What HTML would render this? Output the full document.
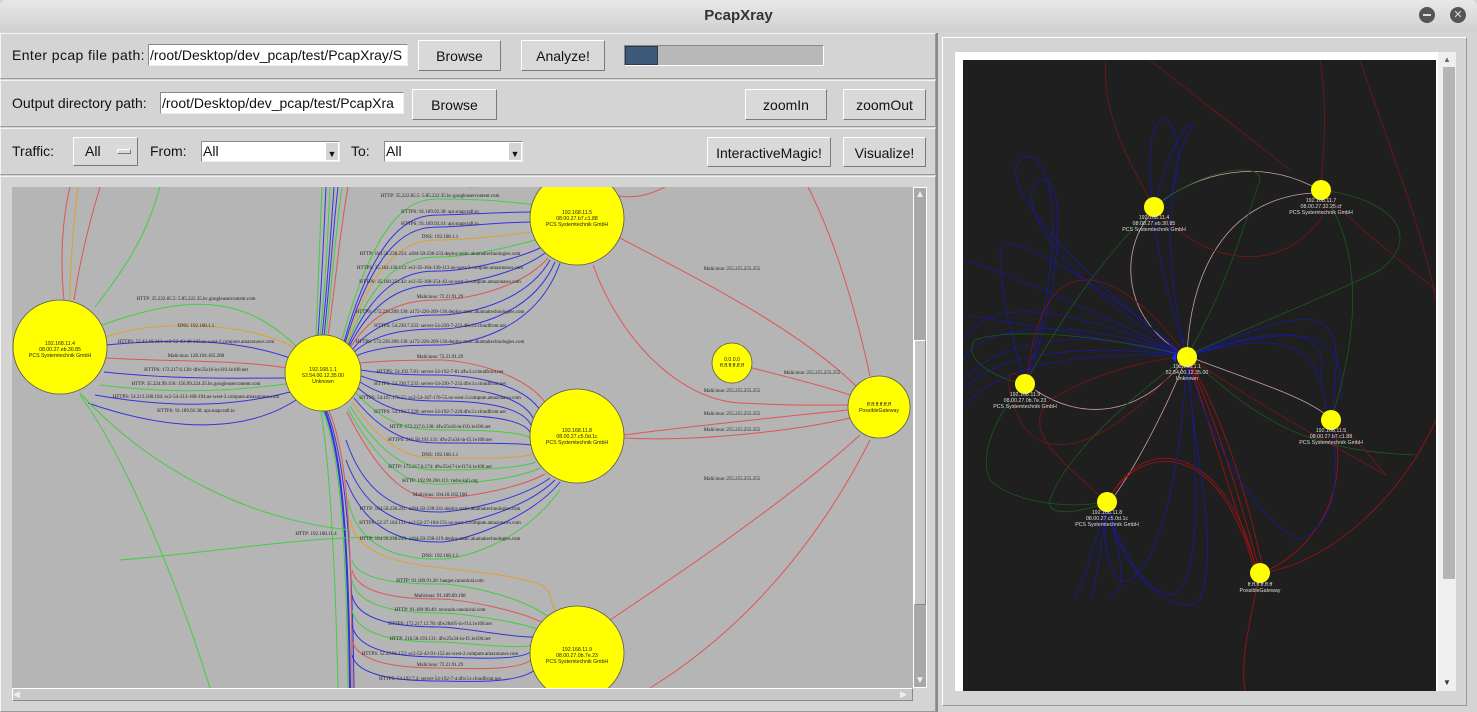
<!DOCTYPE html>
<html><head><meta charset="utf-8"><style>
*{box-sizing:border-box;margin:0;padding:0}
body{width:1477px;height:712px;overflow:hidden;background:#d4d4d4;font-family:"Liberation Sans","DejaVu Sans",sans-serif;font-size:14px;color:#111;position:relative}
.abs{position:absolute}
.title{left:0;top:0;width:1477px;height:32px;background:linear-gradient(#e8e8e8,#d0d0d0);border-radius:6px 6px 0 0;text-align:center;line-height:32px;font-weight:bold;font-size:15px;color:#333}
.panel{border:1px solid #f4f4f4;border-right-color:#9a9a9a;border-bottom-color:#9a9a9a;background:#d4d4d4}
.btn{background:#d9d9d9;border:1px solid #fff;border-right-color:#7a7a7a;border-bottom-color:#7a7a7a;text-align:center;line-height:30px;font-size:14px}
.entry{background:#fff;border:1px solid #888;border-right-color:#eee;border-bottom-color:#eee;line-height:20px;font-size:14px;padding-left:1px;overflow:hidden;white-space:nowrap}
.lbl{font-size:14px;line-height:20px}
.circ{border-radius:50%;background:#555;width:16px;height:16px}
</style></head><body>
<div class="abs title">PcapXray</div>
<div class="abs circ" style="left:1419px;top:7px"><div style="position:absolute;left:4px;top:7px;width:8px;height:2px;background:#ddd"></div></div>
<div class="abs circ" style="left:1450px;top:7px;color:#ddd;font-size:11px;line-height:16px;text-align:center;font-weight:bold">✕</div>

<div class="abs panel" style="left:0;top:33px;width:936px;height:46px"></div>
<div class="abs lbl" style="left:12px;top:45px;letter-spacing:0.4px">Enter pcap file path:</div>
<div class="abs entry" style="left:148px;top:44px;width:260px;height:22px">/root/Desktop/dev_pcap/test/PcapXray/S</div>
<div class="abs btn" style="left:418px;top:40px;width:83px;height:31px">Browse</div>
<div class="abs btn" style="left:521px;top:40px;width:84px;height:31px">Analyze!</div>
<div class="abs" style="left:624px;top:45px;width:200px;height:21px;background:#b8b8b8;border:1px solid #fff;border-top-color:#888;border-left-color:#888"><div style="width:33px;height:19px;background:#3e5a78;border:1px solid #2a3a4a"></div></div>

<div class="abs panel" style="left:0;top:80px;width:936px;height:47px"></div>
<div class="abs lbl" style="left:12px;top:93px">Output directory path:</div>
<div class="abs entry" style="left:160px;top:92px;width:244px;height:22px">/root/Desktop/dev_pcap/test/PcapXra</div>
<div class="abs btn" style="left:412px;top:89px;width:85px;height:31px">Browse</div>
<div class="abs btn" style="left:745px;top:89px;width:82px;height:31px">zoomIn</div>
<div class="abs btn" style="left:843px;top:89px;width:83px;height:31px">zoomOut</div>

<div class="abs panel" style="left:0;top:128px;width:936px;height:47px"></div>
<div class="abs lbl" style="left:12px;top:141px">Traffic:</div>
<div class="abs btn" style="left:73px;top:137px;width:65px;height:29px;text-align:left;padding-left:11px;line-height:27px">All<span style="position:absolute;left:43px;top:11px;width:14px;height:5px;border:1px solid #fff;border-right-color:#777;border-bottom-color:#777"></span></div>
<div class="abs lbl" style="left:150px;top:141px">From:</div>
<div class="abs entry" style="left:201px;top:141px;width:139px;height:21px;line-height:19px">All<span style="position:absolute;right:1px;top:1px;width:12px;height:17px;background:#d4d4d4;font-size:9px;line-height:22px;text-align:center">▼</span></div>
<div class="abs lbl" style="left:351px;top:141px">To:</div>
<div class="abs entry" style="left:384px;top:141px;width:139px;height:21px;line-height:19px">All<span style="position:absolute;right:1px;top:1px;width:12px;height:17px;background:#d4d4d4;font-size:9px;line-height:22px;text-align:center">▼</span></div>
<div class="abs btn" style="left:707px;top:137px;width:124px;height:30px">InteractiveMagic!</div>
<div class="abs btn" style="left:843px;top:137px;width:83px;height:30px">Visualize!</div>

<div class="abs panel" style="left:0;top:176px;width:936px;height:536px"></div>

<svg class="abs" style="left:12px;top:187px" width="901" height="501" viewBox="12 187 901 501">
<rect x="12" y="187" width="901" height="501" fill="#b5b5b5"/>
<g fill="none" stroke-width="1">
<path d="M320,336 C326,280 328,230 330,187" stroke="#44cc44"/>
<path d="M322,336 C328,280 331,230 334,187" stroke="#3333dd"/>
<path d="M324,336 C330,280 333,230 338,187" stroke="#3333dd"/>
<path d="M326,336 C332,280 336,230 342,187" stroke="#44cc44"/>
<path d="M318,336 C322,280 324,230 326,187" stroke="#3333dd"/>
<path d="M328,336 C336,280 340,230 348,187" stroke="#e05555"/>
<path d="M316,336 C318,280 320,230 322,187" stroke="#44cc44"/>
<path d="M325,411 C340,450 348,520 350,688" stroke="#3333dd" stroke-width="2"/>
<path d="M327,411 C342,450 352,520 354,688" stroke="#3333dd"/>
<path d="M323,411 C338,450 346,520 348,688" stroke="#44cc44"/>
<path d="M321,411 C330,470 335,560 338,688" stroke="#44cc44"/>
<path d="M329,411 C346,450 352,520 352,688" stroke="#e05555"/>
<path d="M64,300 C60,260 62,220 70,187" stroke="#e05555"/>
<path d="M70,300 C70,260 74,220 78,187" stroke="#e0a030"/>
<path d="M74,300 C80,260 90,220 100,187" stroke="#e05555"/>
<path d="M95,307 C140,250 150,220 160,187" stroke="#44cc44"/>
<path d="M102,325 C200,290 250,300 300,350" stroke="#44cc44"/>
<path d="M298,350 C250,320 150,320 106,337" stroke="#e0a030"/>
<path d="M106,345 C180,338 240,340 290,358" stroke="#3333dd"/>
<path d="M106,358 C180,362 240,360 286,368" stroke="#e05555"/>
<path d="M104,372 C180,380 240,378 286,378" stroke="#3333dd"/>
<path d="M100,385 C180,395 240,390 286,384" stroke="#44cc44"/>
<path d="M95,395 C180,410 240,405 290,392" stroke="#3333dd"/>
<path d="M88,403 C180,435 250,430 296,400" stroke="#3333dd"/>
<path d="M80,395 C120,450 170,560 210,688" stroke="#44cc44"/>
<path d="M350,530 C250,520 150,470 80,393" stroke="#44cc44"/>
<path d="M120,560 C240,550 340,530 420,540" stroke="#44cc44"/>
<path d="M342,340 C380,199 420,199 440,199 S500,200 535,205" stroke="#44cc44"/>
<path d="M344,342 C380,215 420,215 440,215 S500,212 535,212" stroke="#3333dd"/>
<path d="M345,343 C380,227 420,227 440,227 S500,222 533,222" stroke="#3333dd"/>
<path d="M346,344 C380,240 420,240 440,240 S500,236 532,232" stroke="#e0a030"/>
<path d="M347,345 C380,257 420,257 440,257 S500,250 535,240" stroke="#44cc44"/>
<path d="M348,346 C380,271 420,271 440,271 S510,262 540,248" stroke="#3333dd"/>
<path d="M349,347 C380,285 420,285 440,285 S515,275 545,253" stroke="#3333dd"/>
<path d="M350,348 C380,300 420,300 440,300 S520,290 548,258" stroke="#e05555"/>
<path d="M352,350 C380,315 420,315 440,315 S525,305 550,260" stroke="#3333dd"/>
<path d="M354,352 C380,329 420,329 440,329 S530,320 555,262" stroke="#3333dd"/>
<path d="M356,356 C380,345 420,345 440,345 S535,335 560,263" stroke="#3333dd"/>
<path d="M360,363 C390,360 420,360 440,360 S520,370 545,402" stroke="#e05555"/>
<path d="M361,370 C390,375 420,375 440,375 S520,380 540,410" stroke="#3333dd"/>
<path d="M361,376 C390,387 420,387 440,387 S520,392 533,418" stroke="#3333dd"/>
<path d="M360,382 C390,401 420,401 440,401 S520,402 531,425" stroke="#3333dd"/>
<path d="M358,388 C390,415 420,415 440,415 S520,415 530,432" stroke="#3333dd"/>
<path d="M356,393 C390,430 420,430 440,430 S520,430 530,438" stroke="#44cc44"/>
<path d="M354,398 C390,443 420,443 440,443 S520,443 531,445" stroke="#3333dd"/>
<path d="M352,402 C390,458 420,458 440,458 S515,460 533,454" stroke="#e0a030"/>
<path d="M350,406 C390,470 420,470 440,470 S515,470 536,462" stroke="#44cc44"/>
<path d="M348,409 C390,484 420,484 440,484 S515,480 540,468" stroke="#44cc44"/>
<path d="M347,412 C390,498 420,498 440,498 S515,490 545,474" stroke="#e05555"/>
<path d="M346,440 C370,512 420,512 440,512 S520,500 550,478" stroke="#3333dd"/>
<path d="M346,460 C370,526 420,526 440,526 S525,510 555,480" stroke="#3333dd"/>
<path d="M346,480 C370,542 420,542 440,542 S530,520 560,482" stroke="#3333dd"/>
<path d="M348,500 C360,559 420,559 440,559 S520,545 560,490" stroke="#44cc44"/>
<path d="M350,520 C360,570 440,565 500,575 S545,590 555,610" stroke="#e0a030"/>
<path d="M352,560 C358,584 420,584 440,584 S520,595 550,618" stroke="#44cc44"/>
<path d="M352,570 C358,599 420,599 440,599 S520,610 545,624" stroke="#e05555"/>
<path d="M352,580 C358,613 420,613 440,613 S520,622 540,630" stroke="#44cc44"/>
<path d="M352,595 C358,627 420,627 440,627 S515,638 535,637" stroke="#3333dd"/>
<path d="M352,610 C358,642 420,642 440,642 S515,650 533,645" stroke="#44cc44"/>
<path d="M352,625 C358,657 420,657 440,657 S515,662 531,652" stroke="#3333dd"/>
<path d="M352,640 C358,668 420,668 440,668 S515,672 531,660" stroke="#e05555"/>
<path d="M352,655 C358,681 420,681 440,681 S515,685 535,670" stroke="#3333dd"/>
<path d="M620,238 C700,280 800,330 858,388" stroke="#e05555"/>
<path d="M593,265 C620,340 680,400 740,403 S820,405 848,405" stroke="#e05555"/>
<path d="M624,435 C700,425 800,415 848,410" stroke="#e05555"/>
<path d="M624,438 C700,442 800,430 850,418" stroke="#e05555"/>
<path d="M752,368 C800,380 830,388 850,395" stroke="#e05555"/>
<path d="M610,620 C700,560 800,490 860,435" stroke="#e05555"/>
<path d="M650,688 C760,620 830,520 870,440" stroke="#e05555"/>
<path d="M808,187 C840,250 860,330 870,376" stroke="#e05555"/>
<path d="M470,187 C520,180 560,175 600,187" stroke="#e05555"/>
<path d="M590,187 C620,200 640,200 665,187" stroke="#e05555"/>
</g>
<g fill="#ffff00" stroke="#555" stroke-width="0.8">
<circle cx="60" cy="347" r="47"/>
<circle cx="323" cy="373" r="38"/>
<circle cx="577" cy="218" r="47"/>
<circle cx="732" cy="363" r="20"/>
<circle cx="879" cy="407" r="31"/>
<circle cx="577" cy="436" r="47"/>
<circle cx="577" cy="653" r="47"/>
</g>
<g font-family="Liberation Sans,sans-serif" font-size="5.2" text-anchor="middle" fill="#222">
<text x="60" y="345">192.168.11.4</text><text x="60" y="351">08.00.27.eb.30.85</text><text x="60" y="357">PCS Systemtechnik GmbH</text>
<text x="323" y="371">192.168.1.1</text><text x="323" y="377">52.54.00.12.35.00</text><text x="323" y="383">Unknown</text>
<text x="577" y="214">192.168.11.5</text><text x="577" y="220">08.00.27.b7.c1.88</text><text x="577" y="226">PCS Systemtechnik GmbH</text>
<text x="732" y="361">0.0.0.0</text><text x="732" y="367">ff.ff.ff.ff.ff.ff</text>
<text x="879" y="406">ff.ff.ff.ff.ff.ff</text><text x="879" y="412">PossibleGateway</text>
<text x="577" y="432">192.168.11.8</text><text x="577" y="438">08.00.27.c5.0d.1c</text><text x="577" y="444">PCS Systemtechnik GmbH</text>
<text x="577" y="651">192.168.11.9</text><text x="577" y="657">08.00.27.0b.7e.23</text><text x="577" y="663">PCS Systemtechnik GmbH</text>
</g>
<g font-family="Liberation Serif,serif" font-size="5" text-anchor="middle" fill="#222">
<text x="196" y="300">HTTP: 35.222.85.5: 5.85.222.35.bc.googleusercontent.com</text>
<text x="196" y="327">DNS: 192.168.1.1</text>
<text x="196" y="343">HTTPS: 52.43.40.243: ec2-52-43-40-243.us-west-2.compute.amazonaws.com</text>
<text x="196" y="357">Malicious: 128.194.165.200</text>
<text x="196" y="371">HTTPS: 172.217.6.138: dfw25s16-in-f10.1e100.net</text>
<text x="196" y="385">HTTP: 35.224.99.156: 156.99.224.35.bc.googleusercontent.com</text>
<text x="196" y="398">HTTPS: 54.213.168.194: ec2-54-213-168-194.us-west-2.compute.amazonaws.com</text>
<text x="196" y="412">HTTPS: 91.189.92.38: api.snapcraft.io</text>
<text x="440" y="197">HTTP: 35.222.85.5: 5.85.222.35.bc.googleusercontent.com</text>
<text x="440" y="213">HTTPS: 91.189.92.38: api.snapcraft.io</text>
<text x="440" y="225">HTTPS: 91.189.92.41: api.snapcraft.io</text>
<text x="440" y="238">DNS: 192.168.1.1</text>
<text x="440" y="255">HTTP: 184.50.238.233: a184-50-238-233.deploy.static.akamaitechnologies.com</text>
<text x="440" y="269">HTTPS: 35.164.130.113: ec2-35-164-130-113.us-west-2.compute.amazonaws.com</text>
<text x="440" y="283">HTTPS: 35.160.254.42: ec2-35-160-254-42.us-west-2.compute.amazonaws.com</text>
<text x="440" y="298">Malicious: 72.21.91.29</text>
<text x="440" y="313">HTTPS: 172.226.209.130: a172-226-209-130.deploy.static.akamaitechnologies.com</text>
<text x="440" y="327">HTTPS: 54.230.7.233: server-54-230-7-233.dfw3.r.cloudfront.net</text>
<text x="440" y="343">HTTPS: 172.226.209.130: a172-226-209-130.deploy.static.akamaitechnologies.com</text>
<text x="440" y="358">Malicious: 72.21.91.29</text>
<text x="440" y="373">HTTPS: 54.192.7.81: server-54-192-7-81.dfw3.r.cloudfront.net</text>
<text x="440" y="385">HTTPS: 54.230.7.233: server-54-230-7-233.dfw3.r.cloudfront.net</text>
<text x="440" y="399">HTTPS: 54.167.176.55: ec2-54-167-176-55.us-west-2.compute.amazonaws.com</text>
<text x="440" y="413">HTTPS: 54.192.7.220: server-54-192-7-220.dfw3.r.cloudfront.net</text>
<text x="440" y="428">HTTP: 172.217.6.138: dfw25s16-in-f10.1e100.net</text>
<text x="440" y="441">HTTPS: 216.58.193.131: dfw25s34-in-f3.1e100.net</text>
<text x="440" y="456">DNS: 192.168.1.1</text>
<text x="440" y="468">HTTP: 172.217.6.174: dfw25s17-in-f174.1e100.net</text>
<text x="440" y="482">HTTP: 192.99.200.113: tiebo.kali.org</text>
<text x="440" y="496">Malicious: 104.18.102.100</text>
<text x="440" y="510">HTTP: 184.50.238.241: a184-50-238-241.deploy.static.akamaitechnologies.com</text>
<text x="440" y="524">HTTPS: 52.27.184.151: ec2-52-27-184-151.us-west-2.compute.amazonaws.com</text>
<text x="440" y="540">HTTP: 184.50.238.219: a184-50-238-219.deploy.static.akamaitechnologies.com</text>
<text x="440" y="557">DNS: 192.168.1.1</text>
<text x="316" y="535">HTTP: 192.168.11.4</text>
<text x="440" y="582">HTTP: 91.189.91.26: hanger.canonical.com</text>
<text x="440" y="597">Malicious: 91.189.89.198</text>
<text x="440" y="611">HTTP: 91.189.90.40: avocado.canonical.com</text>
<text x="440" y="625">HTTPS: 172.217.12.78: dfw28s05-in-f14.1e100.net</text>
<text x="440" y="640">HTTP: 216.58.193.131: dfw25s34-in-f3.1e100.net</text>
<text x="440" y="655">HTTPS: 52.43.91.152: ec2-52-43-91-152.us-west-2.compute.amazonaws.com</text>
<text x="440" y="666">Malicious: 72.21.91.29</text>
<text x="440" y="680">HTTPS: 54.192.7.4: server-54-192-7-4.dfw3.r.cloudfront.net</text>
<text x="732" y="270">Malicious: 255.255.255.255</text>
<text x="812" y="374">Malicious: 255.255.255.255</text>
<text x="732" y="392">Malicious: 255.255.255.255</text>
<text x="732" y="415">Malicious: 255.255.255.255</text>
<text x="732" y="431">Malicious: 255.255.255.255</text>
<text x="732" y="480">Malicious: 255.255.255.255</text>
</g>
</svg>
<div class="abs" style="left:913px;top:187px;width:14px;height:501px;background:#a8a8a8;border:1px solid #fff"></div>
<div class="abs" style="left:914px;top:202px;width:12px;height:138px;background:#a8a8a8"></div>
<div class="abs" style="left:914px;top:340px;width:12px;height:265px;background:#c8c8c8;border:1px solid #fff;border-right-color:#888;border-bottom-color:#888"></div>
<div class="abs" style="left:914px;top:188px;width:12px;height:13px;color:#eee;font-size:10px;text-align:center;line-height:13px">▲</div>
<div class="abs" style="left:914px;top:674px;width:12px;height:13px;color:#eee;font-size:10px;text-align:center;line-height:13px">▼</div>
<div class="abs" style="left:12px;top:688px;width:901px;height:13px;background:#c8c8c8;border:1px solid #fff;border-right-color:#888;border-bottom-color:#888"></div>
<div class="abs" style="left:13px;top:688px;width:12px;height:12px;color:#eee;font-size:9px;line-height:12px">◀</div>
<div class="abs" style="left:900px;top:688px;width:12px;height:12px;color:#eee;font-size:9px;line-height:12px">▶</div>

<div class="abs" style="left:936px;top:33px;width:2px;height:679px;background:#8a8a8a"></div>
<div class="abs" style="left:942px;top:37px;width:525px;height:669px;border:1px solid #fff;border-right-color:#999;border-bottom-color:#999"></div>
<div class="abs" style="left:955px;top:52px;width:495px;height:639px;background:#fff"></div>
<div class="abs" style="left:1438px;top:52px;width:18px;height:639px;background:#efefef"></div>
<div class="abs" style="left:1443px;top:67px;width:12px;height:512px;background:#b5b5b5"></div>
<div class="abs" style="left:1441px;top:55px;width:12px;height:10px;color:#666;font-size:8px;text-align:center">▲</div>
<div class="abs" style="left:1441px;top:678px;width:12px;height:10px;color:#333;font-size:8px;text-align:center">▼</div>
<svg class="abs" style="left:963px;top:60px" width="473" height="631" viewBox="963 60 473 631">
<rect x="963" y="60" width="473" height="631" fill="#1f1f1f"/>
<g fill="none" stroke-width="0.8">
<path d="M1106,60 C1100,120 1140,180 1154,207" stroke="#7a1515"/>
<path d="M1150,60 C1200,100 1240,130 1290,170" stroke="#7a1515"/>
<path d="M1320,60 C1330,120 1320,180 1321,190" stroke="#7a1515"/>
<path d="M1360,60 C1390,150 1420,220 1436,300" stroke="#7a1515"/>
<path d="M1154,207 C1200,170 1260,160 1312,186" stroke="#c8a0a8"/>
<path d="M1187,356 C1190,280 1220,200 1312,193" stroke="#c8a0a8"/>
<path d="M1187,356 C1120,320 1120,250 1150,215" stroke="#c8a0a8"/>
<path d="M1187,356 C1250,380 1300,395 1325,414" stroke="#c8a0a8"/>
<path d="M1187,356 C1170,400 1140,460 1115,495" stroke="#c8a0a8"/>
<path d="M1187,356 C1140,420 1080,420 1035,390" stroke="#c8a0a8"/>
<path d="M1187,356 C1220,430 1240,500 1258,565" stroke="#aa1111"/>
<path d="M1187,356 C1230,430 1250,510 1262,565" stroke="#aa1111"/>
<path d="M1187,356 C1215,440 1235,510 1256,566" stroke="#aa1111"/>
<path d="M1331,420 C1350,470 1330,540 1268,570" stroke="#aa1111"/>
<path d="M1436,420 C1400,500 1330,560 1268,572" stroke="#aa1111"/>
<path d="M1107,502 C1150,420 1230,460 1255,565" stroke="#aa1111"/>
<path d="M1107,502 C1140,440 1220,440 1253,566" stroke="#aa1111"/>
<path d="M1260,573 C1250,620 1240,660 1245,691" stroke="#aa1111"/>
<path d="M1187,356 C1050,300 990,300 963,340" stroke="#1a1a9a"/>
<path d="M1187,356 C1050,310 980,330 963,360" stroke="#1a1a9a"/>
<path d="M1187,356 C1060,320 990,350 963,380" stroke="#1a1a9a"/>
<path d="M1187,356 C1060,340 990,360 963,390" stroke="#1a1a9a"/>
<path d="M1187,356 C1060,350 1000,370 963,405" stroke="#1a1a9a"/>
<path d="M1187,356 C1060,330 1000,320 963,315" stroke="#1a1a9a"/>
<path d="M1187,356 C1070,300 1000,270 963,260" stroke="#1a1a9a"/>
<path d="M1187,356 C1050,250 1000,180 1020,160 C1040,140 1080,200 1025,384" stroke="#1a1a9a"/>
<path d="M1187,356 C1060,280 1010,200 1040,180 C1070,170 1060,300 1025,384" stroke="#1a1a9a"/>
<path d="M1187,356 C1070,260 1000,230 1000,250 C1000,290 1010,330 1025,384" stroke="#1a1a9a"/>
<path d="M1187,356 C1150,250 1140,140 1160,120 C1180,110 1190,200 1154,207" stroke="#1a1a9a"/>
<path d="M1187,356 C1160,260 1170,160 1190,130 C1200,120 1180,110 1154,207" stroke="#1a1a9a"/>
<path d="M1187,356 C1300,310 1340,300 1336,370 C1334,400 1331,420 1331,420" stroke="#1a1a9a"/>
<path d="M1187,356 C1290,320 1330,330 1320,380" stroke="#1a1a9a"/>
<path d="M1187,356 C1280,330 1320,340 1326,410" stroke="#1a1a9a"/>
<path d="M1187,356 C1300,320 1350,330 1340,400" stroke="#1a1a9a"/>
<path d="M1187,356 C1200,480 1200,560 1180,590 C1160,610 1120,560 1107,502" stroke="#1a1a9a"/>
<path d="M1187,356 C1180,480 1160,560 1130,580 C1110,590 1100,540 1107,502" stroke="#1a1a9a"/>
<path d="M1187,356 C1195,470 1220,540 1200,600 C1180,620 1120,580 1107,502" stroke="#1a1a9a"/>
<path d="M1107,502 C1090,560 1080,590 1075,600" stroke="#1a1a9a"/>
<path d="M1107,502 C1120,560 1130,590 1110,595" stroke="#1a1a9a"/>
<path d="M1107,502 C1100,560 1095,590 1090,598" stroke="#1a1a9a"/>
<path d="M1187,356 C1210,450 1260,520 1300,540 C1340,520 1340,470 1331,420" stroke="#1a1a9a"/>
<path d="M1187,356 C1080,330 1000,330 975,340 C960,360 1000,380 1025,384" stroke="#1a5a1a"/>
<path d="M1187,356 C1100,420 1060,470 1050,500 C1045,520 1090,510 1107,502" stroke="#1a5a1a"/>
<path d="M1321,190 C1400,200 1420,240 1380,270 C1320,300 1240,330 1187,356" stroke="#1a5a1a"/>
<path d="M1154,207 C1200,170 1260,160 1260,180 C1240,240 1220,300 1187,356" stroke="#1a5a1a"/>
<path d="M1154,207 C1100,260 1060,320 1025,384" stroke="#1a5a1a"/>
<path d="M1187,356 C1260,420 1300,450 1415,455" stroke="#1a5a1a"/>
<path d="M1331,420 C1370,300 1350,230 1321,190" stroke="#1a5a1a"/>
<path d="M1187,356 C1100,460 1040,460 1020,420 C1000,380 1010,360 1025,384" stroke="#7a1515"/>
<path d="M1187,356 C1130,280 1080,260 1050,300 C1030,330 1030,370 1025,384" stroke="#7a1515"/>
<path d="M1154,207 C1200,260 1260,270 1300,240 C1340,210 1320,190 1321,190" stroke="#7a1515"/>
<path d="M1107,502 C1060,460 1020,430 1050,400 C1100,370 1150,360 1187,356" stroke="#7a1515"/>
<path d="M1187,356 C1280,420 1380,470 1385,475 C1390,480 1360,440 1331,420" stroke="#7a1515"/>
<path d="M1321,190 C1360,230 1400,260 1436,290" stroke="#7a1515"/>
<path d="M1025,384 C990,420 980,460 990,480 C1010,500 1060,510 1107,502" stroke="#1a5a1a"/>
</g>
<g fill="#ffff00">
<circle cx="1154" cy="207" r="10"/><circle cx="1321" cy="190" r="10"/><circle cx="1187" cy="357" r="10"/>
<circle cx="1025" cy="384" r="10"/><circle cx="1331" cy="420" r="10"/><circle cx="1107" cy="502" r="10"/><circle cx="1260" cy="573" r="10"/>
</g>
<path d="M1176,352 L1172,358 L1176,362 Z" fill="#2222ff"/>
<g font-family="Liberation Sans,sans-serif" font-size="5.3" text-anchor="middle" fill="#ddd">
<text x="1154" y="219">192.168.11.4</text><text x="1154" y="225">08.00.27.eb.30.85</text><text x="1154" y="231">PCS Systemtechnik GmbH</text>
<text x="1321" y="202">192.168.11.7</text><text x="1321" y="208">08.00.27.32.25.cf</text><text x="1321" y="214">PCS Systemtechnik GmbH</text>
<text x="1187" y="368">192.168.1.1</text><text x="1187" y="374">52.54.00.12.35.00</text><text x="1187" y="380">Unknown</text>
<text x="1025" y="396">192.168.11.9</text><text x="1025" y="402">08.00.27.0b.7e.23</text><text x="1025" y="408">PCS Systemtechnik GmbH</text>
<text x="1331" y="432">192.168.11.5</text><text x="1331" y="438">08.00.27.b7.c1.88</text><text x="1331" y="444">PCS Systemtechnik GmbH</text>
<text x="1107" y="514">192.168.11.8</text><text x="1107" y="520">08.00.27.c5.0d.1c</text><text x="1107" y="526">PCS Systemtechnik GmbH</text>
<text x="1260" y="586">ff.ff.ff.ff.ff.ff</text><text x="1260" y="592">PossibleGateway</text>
</g>
</svg>
</body></html>
